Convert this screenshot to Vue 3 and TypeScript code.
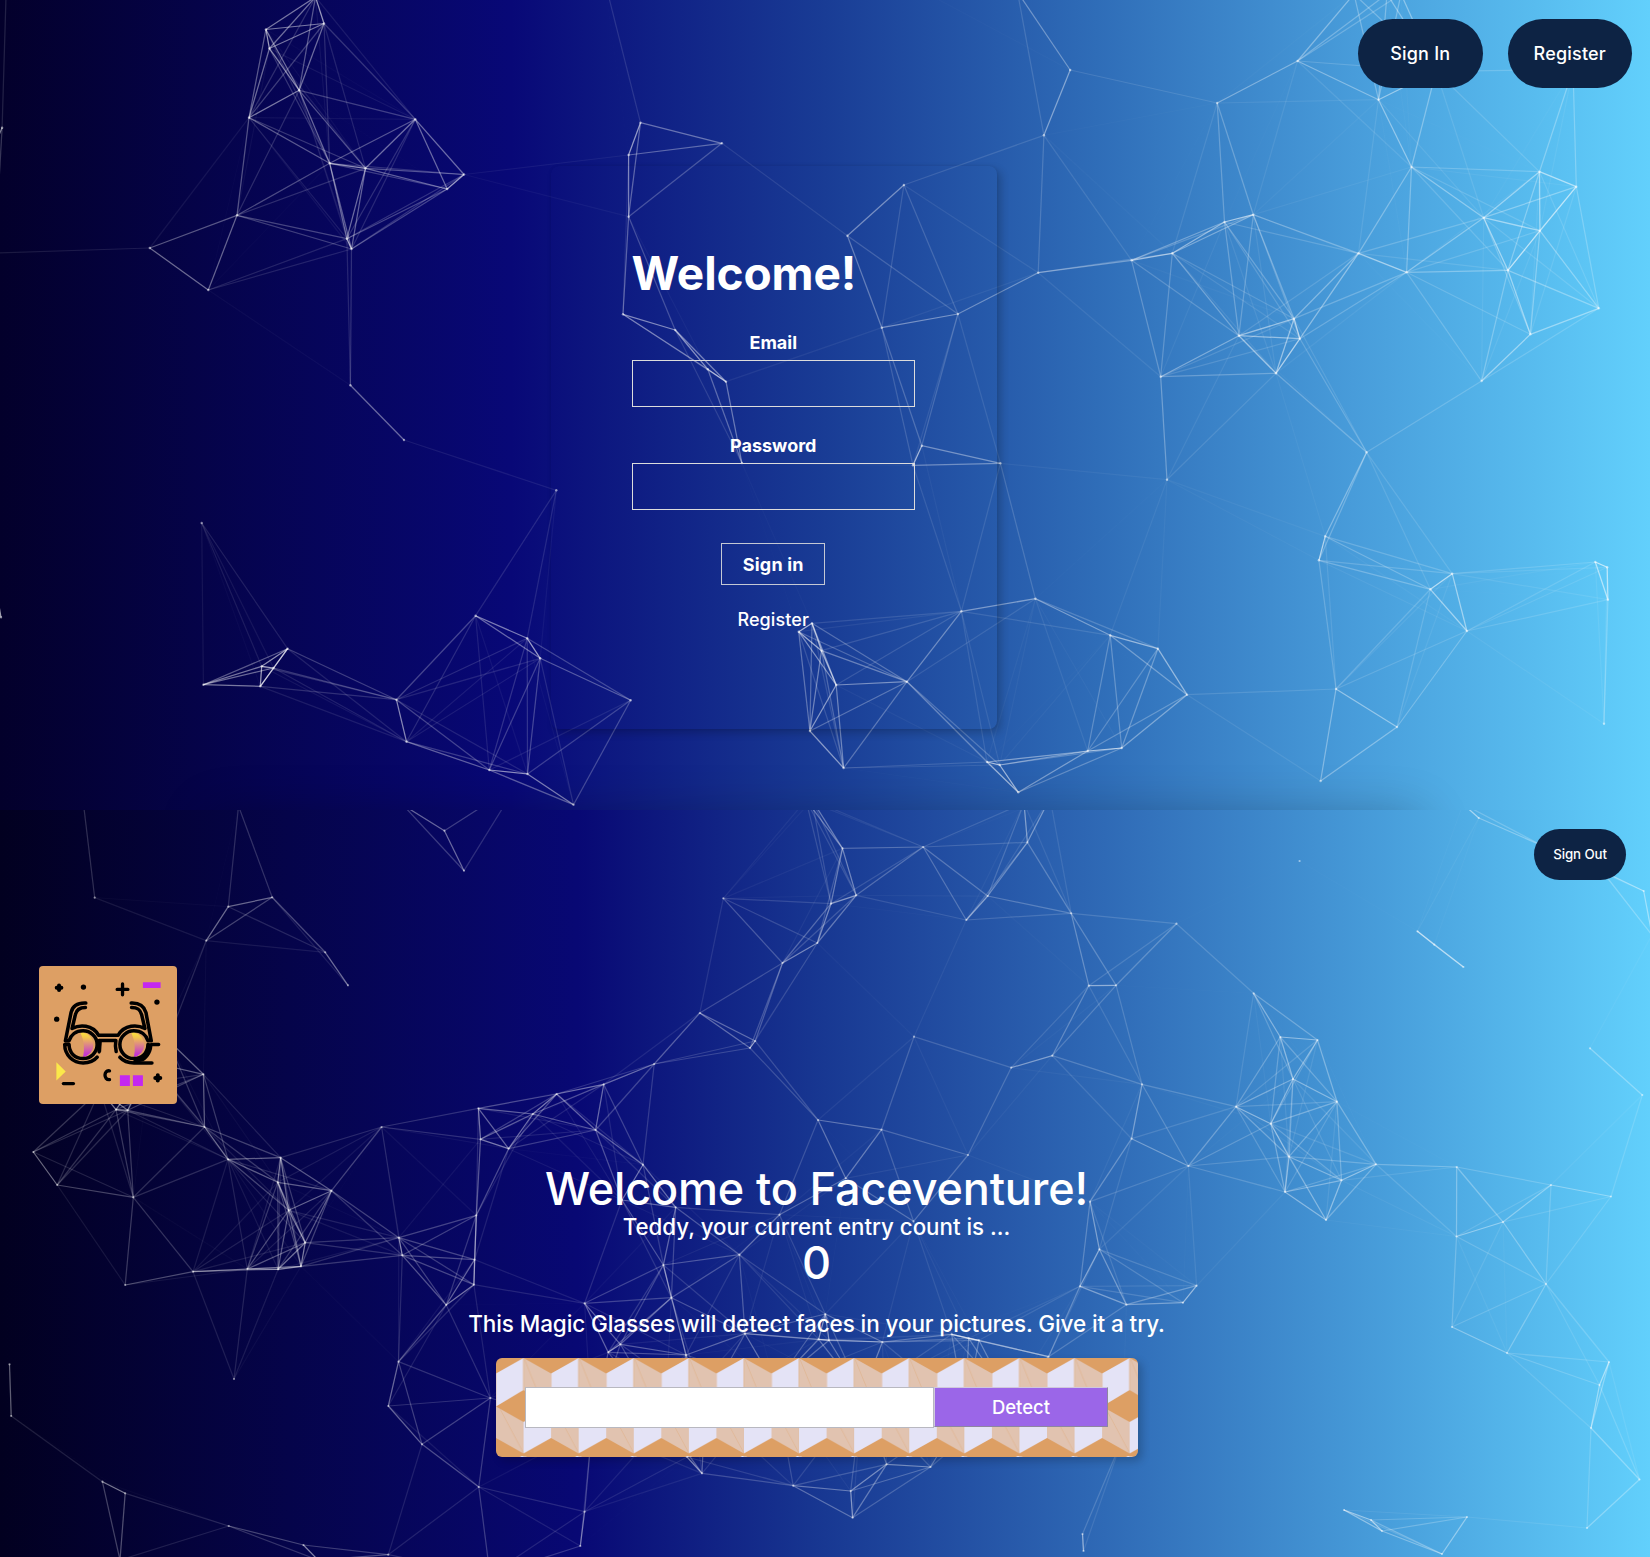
<script setup lang="ts">
type Point = [number, number]
interface Link { x1: number; y1: number; x2: number; y2: number; o: string }

const loginPoints: Point[] = [
  [6.5, -20], [2.1, 127.7], [-18, 175], [-5, 253], [315.5, -3], [265.9, 29.5], [324, 23.5], [269.4, 48.5],
  [299.2, 90.3], [249, 117.7], [415.3, 119.3], [329.7, 163.3], [365.5, 168.3], [464, 174.5], [447.2, 189],
  [237, 215.3], [346.9, 238.7], [351.5, 249], [149.8, 248], [208.3, 290], [350.4, 385.3],
  [604, -22], [640.5, 122.7], [628.6, 155], [721.9, 143.3], [628.6, 216.7], [847.4, 235.7], [903.9, 185],
  [1070.2, 70], [1043.9, 135.3], [1038.2, 272.7], [957.9, 314], [881.8, 327.7], [623, 314.3], [675.2, 330],
  [707.8, 369.3], [726, 381.7], [1017.5, -8], [915, -13],
  [1217.2, 103], [1297.5, 61], [1378.5, 99.7], [1411.5, 167], [1539.5, 171.7], [1576.3, 186.7],
  [1483.7, 217.7], [1539.9, 230.7], [1507.9, 270.3], [1358.5, 253.3], [1406.6, 272.3], [1253.3, 214.7],
  [1224.5, 222], [1172.3, 253.3], [1131.6, 260.3], [1238.9, 335.7], [1294, 318.7], [1299.9, 338.7],
  [1276, 373.3], [1160.7, 376.7], [1598.8, 308.3], [1530.4, 334.3], [1481.6, 381], [1436, 71.3],
  [1573, 69.5], [1354, -6], [1387, -6], [1401, -6],
  [404, 440], [201.7, 523], [287.6, 648.7], [261.7, 666.3], [273.6, 668], [203.4, 684.7], [260.3, 686.3],
  [396.4, 699.7], [406.5, 741.7], [475.6, 615.7], [527.2, 638.3], [540.2, 658.3], [489.3, 770],
  [527.5, 774], [1, 617.3], [-2, 600],
  [556.3, 490.3], [630.7, 700.3], [573.5, 804.7], [921.8, 445.7], [913, 465.3], [1000.4, 463.3],
  [741.9, 463], [961.4, 611.3], [1035.4, 598.7], [812, 623.3], [798.7, 631.7], [821.5, 650.7],
  [836.2, 685], [907, 681.7], [809.9, 731], [843.6, 768], [987, 762], [999.7, 765], [1018.3, 792.3],
  [1087.7, 751], [1167, 479.7], [1366.6, 452.3], [1325.2, 536.3], [1318.9, 560.3], [1452.2, 573.7],
  [1430.4, 589.3], [1466.9, 631], [1595.3, 562], [1607.2, 567.3], [1607.9, 599.7], [1604, 723.7],
  [1336, 689], [1397, 727], [1320.6, 781], [1110.2, 635.3], [1157.9, 648.7], [1187, 694.7], [1121.7, 748],
]

const homePoints: Point[] = [
  [83, 800], [94.7, 897.7], [228.3, 906.7], [272.2, 897.3], [206.2, 940.7], [325.2, 952.3], [348, 985.3],
  [238.5, 806], [444.4, 830.7], [464, 870.7], [403, 805], [517.5, 784], [203.4, 1074.3], [204.5, 1127],
  [228, 1159.3], [280.6, 1157.7], [381.6, 1127], [478.4, 1108.3], [480.5, 1139.3], [508.6, 1148.7],
  [532.8, 1114], [33.3, 1152], [116, 1109.7], [127.7, 1110.3], [168, 1040], [100, 1090], [150, 1062],
  [842.5, 848.3], [923.2, 847], [1027.4, 842.3], [987.7, 896], [966.3, 920], [1071.2, 913.3],
  [723.3, 898.3], [831, 903.7], [856.2, 895.3], [817.3, 943], [782.5, 963], [699.8, 1013], [755.2, 1041],
  [750, 1048], [654.2, 1064], [603.7, 1084.3], [556.7, 1094], [595.6, 1130], [643, 1164.7],
  [914, 1036.7], [818, 1120], [881.5, 1129.7], [845.7, 1178.3], [968, 1155], [1011.2, 1067.7],
  [1052.3, 1055.7], [1088.8, 985.7], [812, 800], [806, 800], [1024, 803], [1050, 798],
  [1116.1, 985.3], [1176.5, 923.7], [1253.6, 993.3], [1280.3, 1037], [1317.5, 1040], [1293, 1079],
  [1337, 1101.7], [1236, 1106.7], [1270.8, 1123.7], [1142, 1084.3], [1131.6, 1138.7], [1188.4, 1166],
  [1289, 1156.7], [1376, 1164.3], [1456.7, 1167], [1341.5, 1180.3], [1299.6, 861], [1478.8, 818],
  [1417.4, 931.3], [1434.3, 944.7], [1463.4, 967], [1643.7, 891], [1602, 871], [1545, 847], [1652, 935],
  [1590, 1048.3], [1642.3, 1095], [1463, 804],
  [57.2, 1185], [133.3, 1197.3], [125.2, 1285], [193, 1271.7], [247.3, 1269], [278.1, 1269.3],
  [301, 1266.3], [305.2, 1242.7], [288.7, 1210.3], [277.8, 1182.3], [331.5, 1190.7], [234, 1379],
  [398.8, 1237.7], [402.3, 1255.3], [476.3, 1215.3], [474.6, 1259.7], [473.9, 1284.7], [446.2, 1305],
  [398.5, 1361.7], [388.3, 1406], [490.4, 1398], [422, 1444.3], [478.8, 1487], [9.5, 1364.3],
  [11.2, 1416], [102.4, 1481.7], [125.2, 1493.3], [120, 1560], [228.7, 1526], [303.4, 1545],
  [388.3, 1554.7], [318, 1560], [490, 1575],
  [675.7, 1207.3], [622, 1200], [779.5, 1214.7], [913.5, 1221.3], [663.4, 1265], [739.4, 1254.7],
  [671.4, 1297.7], [584.6, 1303.3], [620.4, 1344.3], [608.2, 1352.3], [686, 1355], [745, 1333.7],
  [825.3, 1314], [818.6, 1339.3], [829, 1340.3], [882.4, 1342], [951.7, 1334.3], [968.7, 1338.3],
  [979, 1340.3], [1048.5, 1356.7], [1090, 1201.7], [1099.4, 1249.3], [1080, 1286.3], [1126.4, 1304.7],
  [1183, 1302.7], [1196.6, 1285.7], [702, 1473.3], [687, 1457], [793.2, 1485.7], [886.6, 1464.3],
  [930.5, 1467], [850.7, 1491], [852.6, 1517.7], [584.6, 1511.7], [580.3, 1546], [1082.5, 1534],
  [1083.5, 1551], [592, 1428], [665, 1422], [705, 1405], [775, 1385], [862, 1395], [965, 1410],
  [1010, 1400], [1122, 1440],
  [1285, 1192], [1326, 1220], [1551, 1185], [1611, 1196.5], [1503, 1222],
  [1456.5, 1236.5], [1546, 1284], [1452, 1327], [1507, 1353], [1609, 1362], [1599.5, 1385],
  [1591, 1428], [1639.5, 1479.5], [1587, 1528], [1344, 1510], [1371, 1520], [1382, 1531],
  [1467, 1517], [1442, 1554],
]

// Particles closer than `reach` are joined; the line fades with distance.
function link(points: Point[], reach: number, strength: number): Link[] {
  const out: Link[] = []
  for (let i = 0; i < points.length; i++) {
    for (let j = i + 1; j < points.length; j++) {
      const [x1, y1] = points[i]
      const [x2, y2] = points[j]
      const d = Math.hypot(x1 - x2, y1 - y2)
      if (d < reach) out.push({ x1, y1, x2, y2, o: (strength * (1 - d / reach)).toFixed(3) })
    }
  }
  return out
}

const loginLinks = link(loginPoints, 181, 0.68)
const homeLinks = link(homePoints, 141, 0.58)
</script>

<template>
  <section class="screen login">
    <svg class="net" viewBox="0 0 1650 810" width="1650" height="810">
      <line v-for="(l, i) in loginLinks" :key="i" :x1="l.x1" :y1="l.y1" :x2="l.x2" :y2="l.y2" :stroke-opacity="l.o" />
      <circle v-for="(p, i) in loginPoints" :key="'p' + i" :cx="p[0]" :cy="p[1]" r="1.2" />
    </svg>
    <nav class="nav">
      <button class="pill">Sign In</button>
      <button class="pill">Register</button>
    </nav>
    <form class="card" @submit.prevent>
      <h1 class="card-title">Welcome!</h1>
      <label class="label email" for="email">Email</label>
      <input id="email" class="field" type="email" />
      <label class="label password" for="password">Password</label>
      <input id="password" class="field" type="password" />
      <button class="submit">Sign in</button>
      <a class="register">Register</a>
    </form>
    <div class="floor"></div>
  </section>

  <section class="screen home">
    <svg class="net" viewBox="0 810 1650 747" width="1650" height="747">
      <line v-for="(l, i) in homeLinks" :key="i" :x1="l.x1" :y1="l.y1" :x2="l.x2" :y2="l.y2" :stroke-opacity="l.o" />
      <circle v-for="(p, i) in homePoints" :key="'p' + i" :cx="p[0]" :cy="p[1]" r="1.1" />
    </svg>
    <nav class="nav nav-out">
      <button class="pill small">Sign Out</button>
    </nav>
    <div class="logo">
      <svg viewBox="28 33 413 413" width="138" height="138">
        <defs>
          <linearGradient id="lens" x1="0" y1="0" x2="0" y2="1">
            <stop offset="0" stop-color="#fbe03c" />
            <stop offset="0.2" stop-color="#f2c64c" />
            <stop offset="0.85" stop-color="#c63fc8" />
            <stop offset="1" stop-color="#c02be8" />
          </linearGradient>
        </defs>
        <path d="M152 232H160A37 37 0 0 1 160 305Q168 268 152 232Z" fill="url(#lens)" />
        <path d="M304 232H312A37 37 0 0 1 312 305Q320 268 304 232Z" fill="url(#lens)" />
        <g fill="none" stroke="#000" stroke-width="10.500" stroke-linecap="round" stroke-linejoin="round">
          <path d="M168 144C140 143 128 155 124 172L107 257H118C123 240 138 227 160 227S202 245 202 268S184 310 160 310S118 293 118 268H105C105 300 130 323 160 323C178 323 194 316 202 306" />
          <path d="M167 157C148 157 140 164 137 178L127 220C150 208 188 208 206 240H265C284 208 322 208 345 220L335 178C331 164 324 157 305 157" />
          <path d="M304 144C332 143 343 155 348 172L364 257H354C349 240 334 227 312 227S270 245 270 268S288 310 312 310S354 293 354 268" />
          <path d="M208 290V256H258C256 268 256 278 259 289" />
          <path d="M270 306C280 317 296 323 312 323H366M366 268H386" />
        </g>
        <path d="M352 264H367C370 288 356 308 340 318L308 325L312 312C338 309 352 290 352 264Z" />
        <path d="M204 258L216 260L214 290L204 288Z" />
        <g fill="none" stroke="#000" stroke-linecap="round">
          <path d="M262 103H294M278 87V119" stroke-width="10" />
          <path d="M81 98H95M88 91V105" stroke-width="12" />
          <path d="M376 368H391M383.500 360V376" stroke-width="12" />
          <path d="M101 385H131" stroke-width="10" />
          <path d="M239 347C221 343 221 375 239 373" stroke-width="10" />
        </g>
        <circle cx="161" cy="96" r="8" />
        <circle cx="381" cy="141" r="8" />
        <circle cx="81" cy="192" r="8" />
        <path d="M339 82H392V99H339ZM270 360H300V392H270ZM309 360H339V392H309Z" fill="#c428f0" />
        <path d="M80 321L108 349L80 376Z" fill="#fbe84a" />
      </svg>
    </div>
    <main class="main">
      <h1 class="headline">Welcome to Faceventure!</h1>
      <p class="count-label">Teddy, your current entry count is ...</p>
      <p class="count">0</p>
      <p class="intro">This Magic Glasses will detect faces in your pictures. Give it a try.</p>
      <form class="detector" @submit.prevent>
        <svg class="cubes" width="642" height="99">
          <defs>
            <pattern id="cube" width="55.100" height="97" patternUnits="userSpaceOnUse">
              <rect width="56" height="97" fill="#dd9f64" />
              <path d="M0 15.500L27.500 0V32L0 48.500ZM27.500 64L55.100 48.500V80L27.500 95.500Z" fill="#e4e3f6" />
              <path d="M27.500 0L55.100 15.500V48.500L27.500 32ZM0 48.500L27.500 64V95.500L0 80Z" fill="#e1c3b0" />
              <path d="M28 0L45 42M4 51L27.500 95M0 15V48M27.500 0V32" stroke="#dfb48f" stroke-width=".7" />
            </pattern>
          </defs>
          <rect width="642" height="99" fill="url(#cube)" />
        </svg>
        <input class="url" type="text" />
        <button class="detect">Detect</button>
      </form>
    </main>
  </section>
</template>

<style>
body { margin: 0; background: #020024; }
</style>

<style scoped>
.screen {
  position: relative;
  box-sizing: border-box;
  width: 1650px;
  overflow: hidden;
  display: flex;
  flex-direction: column;
  font-family: Inter, Roboto, "Noto Sans", sans-serif;
  font-weight: 500;
  color: #fff;
}
.login { height: 810px; background: linear-gradient(90deg, #03002b 0%, #080877 31%, #193c95 50%, #2f6db8 66.500%, #489cda 82%, #62d0fc 100%); }
.home { height: 747px; background: linear-gradient(90deg, #020020 0%, #080874 35%, #183892 50%, #2f6ab6 67%, #489edb 84%, #62d0fc 100%); }
.net { position: absolute; left: 0; top: 0; }
.net line { stroke: #fff; stroke-width: 1.250; }
.net circle { fill: #fff; fill-opacity: .5; }
button, input { font-family: inherit; color: inherit; box-sizing: border-box; padding: 0; margin: 0; }
.nav { position: relative; display: flex; justify-content: flex-end; gap: 25px; padding: 18.500px 18px 0; }
.pill {
  width: 124.500px; height: 69.500px; border: 0; border-radius: 35px;
  background: #0d2344; color: #fff; font-size: 18px; font-weight: 500; letter-spacing: .2px;
}
.nav-out { padding-right: 24px; }
.pill.small { width: 92px; height: 51.500px; border-radius: 26px; font-size: 13.300px; letter-spacing: -.1px; }

.card {
  position: relative;
  box-sizing: border-box;
  width: 446px; height: 563px;
  margin: 78px 0 0 550.500px;
  padding: 80px 81.500px 0 81px;
  border-radius: 8px;
  box-shadow: 4px 4px 8px rgba(0, 0, 0, .2), 0 0 3px rgba(0, 0, 0, .08);
  display: flex; flex-direction: column; align-items: center;
}
.card-title { align-self: flex-start; margin: 0; font-size: 46px; line-height: 54px; font-weight: 700; letter-spacing: -.1px; }
.label { font-size: 18px; line-height: 24px; font-weight: 700; letter-spacing: 0; }
.email { margin-top: 31px; }
.password { margin-top: 27px; }
.label + .field { margin-top: 5px; }
.field { width: 283px; height: 47px; background: transparent; border: 1px solid #dcdcdc; }
.submit { width: 104px; height: 42px; margin-top: 33px; border: 1px solid #c4c8d4; background: transparent; font-size: 18px; font-weight: 700; letter-spacing: .2px; }
.register { margin-top: 23px; font-size: 18px; line-height: 24px; letter-spacing: .1px; }
.floor { position: absolute; left: 225px; top: 832px; width: 1180px; height: 40px; box-shadow: 0 0 50px 15px rgba(0, 0, 0, .27); }

.logo { position: relative; width: 138px; height: 138px; margin: 86px 0 0 39.400px; border-radius: 4px; overflow: hidden; background: #dd9f64; }
.logo svg { display: block; }
.main { position: relative; display: flex; flex-direction: column; align-items: center; width: 1633px; margin-top: 57.500px; }
.headline, .count-label, .count, .intro { margin: 0; white-space: nowrap; }
.headline { font-size: 45px; line-height: 54px; font-weight: 500; letter-spacing: -.15px; }
.count-label { font-size: 22.300px; line-height: 22px; letter-spacing: 0; }
.count { font-size: 45px; line-height: 50px; }
.intro { margin-top: 22px; font-size: 22.500px; line-height: 28px; letter-spacing: -.1px; }
.detector {
  position: relative; box-sizing: border-box; display: flex; align-items: center; justify-content: center;
  width: 642px; height: 99px; margin-top: 20px; border-radius: 6px; box-shadow: 4px 4px 8px rgba(0, 0, 0, .2);
}
.cubes { position: absolute; left: 0; top: 0; border-radius: 6px; }
.url { position: relative; width: 409px; height: 41px; border: 1px solid #b8b8c0; background: #fff; color: #222; }
.detect {
  position: relative; width: 174px; height: 40px; border: 1.500px solid; border-color: #cfc8dc #8d86a0 #8d86a0 #cfc8dc;
  background: #9b66e8; color: #fff; font-size: 18.500px; font-weight: 500; letter-spacing: 0;
}
</style>
